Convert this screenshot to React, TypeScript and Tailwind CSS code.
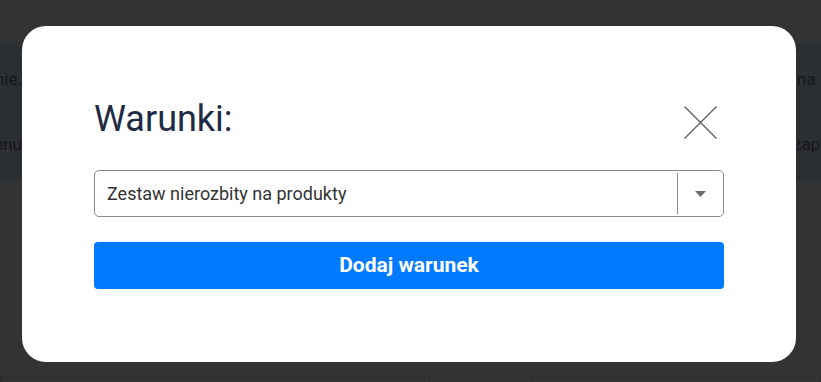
import React from "react";

const font = { fontFamily: "Roboto, 'Noto Sans', sans-serif" };

function CloseIcon() {
  return (
    <svg width="33" height="33" viewBox="0 0 33 33" fill="none">
      <path d="M0.5 0.5L32.5 32.5M32.5 0.5L0.5 32.5" stroke="#555a60" strokeWidth="1.2" />
    </svg>
  );
}

export default function App() {
  return (
    <div className="relative h-[382px] w-[821px] overflow-hidden bg-[#333333]" style={font}>
      {/* page behind the overlay */}
      <div className="mt-[43px] flex h-[138px] justify-between bg-[#2c2f32] text-[17px] text-[#141619]">
        <div className="flex w-[22px] flex-col items-end justify-between overflow-hidden whitespace-nowrap py-[24px]">
          <span>ustawienie.</span>
          <span>menu</span>
        </div>
        <div className="flex w-[24px] flex-col justify-between overflow-hidden whitespace-nowrap py-[24px]">
          <span>na</span>
          <span className="-ml-[4px]">zapisane</span>
        </div>
      </div>
      <div className="mt-[196px] flex">
        <div className="h-[20px] w-[430px] border border-[#2a2a2a]" />
        <div className="ml-[101px] h-[20px] flex-1 border border-[#2a2a2a]" />
      </div>

      {/* modal */}
      <div className="absolute left-[22px] top-[26px] h-[336px] w-[774px] rounded-[24px] bg-white px-[72px] pt-[72px]">
        <div className="flex h-[42px] items-center justify-between">
          <h2 className="text-[36px] font-normal leading-none text-[#1f2a44]">Warunki:</h2>
          <div className="mr-[7px] mt-[6px]">
            <CloseIcon />
          </div>
        </div>
        <div className="mt-[30px] flex h-[47px] items-stretch rounded-[5px] border border-[#8a8a8a]">
          <div className="flex flex-1 items-center pl-[12px] text-[18px] text-[#333333]">
            Zestaw nierozbity na produkty
          </div>
          <div className="my-[2px] w-px bg-[#8a8a8a]" />
          <div className="flex w-[45px] items-center justify-center">
            <svg width="11" height="6" viewBox="0 0 11 6">
              <path d="M0 0H11L5.5 6Z" fill="#6b6b6b" />
            </svg>
          </div>
        </div>
        <button className="mt-[25px] flex h-[47px] w-full items-center justify-center rounded-[4px] bg-[#007bff] text-[21px] font-bold text-white">
          Dodaj warunek
        </button>
      </div>
    </div>
  );
}
